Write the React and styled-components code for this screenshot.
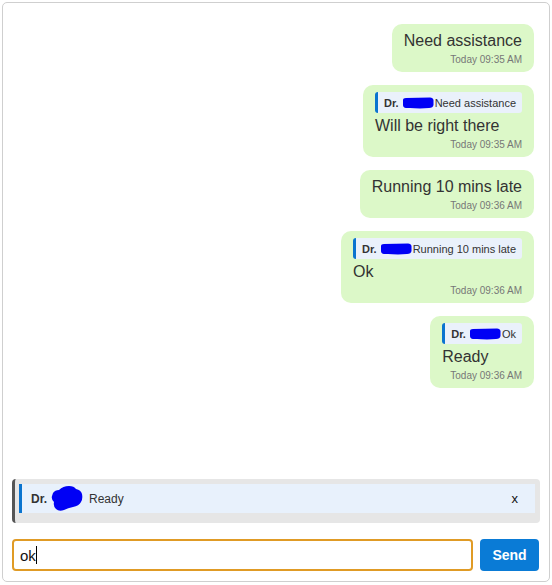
import React from "react";
import styled, { createGlobalStyle } from "styled-components";

const GlobalStyle = createGlobalStyle`
  html, body {
    margin: 0;
    padding: 0;
    background: #ffffff;
    font-family: "Liberation Sans", Arial, sans-serif;
  }
`;

const Panel = styled.div`
  box-sizing: border-box;
  margin: 2px;
  width: 548px;
  height: 580px;
  border: 1px solid #cfcfcf;
  border-radius: 5px;
  display: flex;
  flex-direction: column;
  background: #fff;
`;

const Messages = styled.div`
  flex: 1;
  display: flex;
  flex-direction: column;
  align-items: flex-end;
  gap: 13px;
  padding: 21px 15px 0 15px;
`;

const Bubble = styled.div`
  background: #dcf8c8;
  border-radius: 10px;
  padding: 7px 12px 6px 12px;
  display: flex;
  flex-direction: column;
  max-width: 80%;
`;

const Quote = styled.div`
  display: flex;
  align-items: center;
  height: 21px;
  background: #eaf1fb;
  border-left: 3px solid #0a74cf;
  border-radius: 3px;
  padding: 0 6px 0 6px;
  margin-bottom: 3px;
  font-size: 11px;
  color: #333;
  white-space: nowrap;
`;

const Name = styled.span`
  font-weight: bold;
  color: #333;
`;

const BlobSvg = styled.svg`
  display: block;
  flex: none;
  margin: 0 ${(p) => p.$gap}px 0 3px;
`;

const Text = styled.div`
  font-size: 16px;
  line-height: 20px;
  color: #333;
  text-align: left;
`;

const Time = styled.div`
  font-size: 10px;
  line-height: 13px;
  color: #777;
  text-align: right;
  margin-top: 2px;
`;

const ReplyBar = styled.div`
  margin: 0 9px;
  background: #e6e6e6;
  border-left: 3px solid #555;
  border-radius: 4px;
  padding: 5px 5px 10px 4px;
`;

const ReplyInner = styled.div`
  display: flex;
  align-items: center;
  height: 29px;
  background: #e8f1fc;
  border-left: 3px solid #0a74cf;
  padding: 0 17px 0 9px;
  font-size: 12px;
  color: #333;
`;

const ReplyText = styled.span`
  flex: 1;
`;

const Close = styled.span`
  font-size: 13px;
  color: #111;
`;

const InputRow = styled.div`
  display: flex;
  gap: 7px;
  padding: 16px 10px 10px 9px;
`;

const Input = styled.div`
  box-sizing: border-box;
  flex: 1;
  height: 32px;
  border: 2px solid #e09b25;
  border-radius: 4px;
  padding: 0 6px;
  display: flex;
  align-items: center;
  font-size: 15px;
  color: #111;
`;

const Caret = styled.span`
  display: inline-block;
  width: 1px;
  height: 18px;
  background: #000;
`;

const SendButton = styled.button`
  width: 59px;
  height: 32px;
  border: none;
  border-radius: 4px;
  background: #0a7bd6;
  color: #fff;
  font-family: "Liberation Sans", Arial, sans-serif;
  font-size: 14px;
  font-weight: 600;
  cursor: pointer;
`;

function SmallBlob() {
  return (
    <BlobSvg $gap={1} width="32" height="12" viewBox="0 0 32 12">
      <path
        d="M1 3 Q1 1 4 1 L28 0.5 Q31 0.5 31.5 3 L31.5 8 Q31 11 27 11 L18 11.5 Q12 11 8 11 L4 11 Q1 10.5 1 8 Z"
        fill="#0000f5"
      />
    </BlobSvg>
  );
}

function BigBlob() {
  return (
    <BlobSvg $gap={6} width="33" height="27" viewBox="0 0 33 27">
      <path
        d="M3 8 Q5 5 9 5 Q13 1 19 1 Q24 1 26 4 Q31 5 32 9 Q33 14 31 17 Q29 21 23 22 Q18 23 14 25 Q9 27 6 24 Q3 21 4 17 Q1 14 2 11 Z"
        fill="#0000f5"
      />
    </BlobSvg>
  );
}

const messages = [
  { text: "Need assistance", time: "Today 09:35 AM" },
  { reply: "Need assistance", text: "Will be right there", time: "Today 09:35 AM" },
  { text: "Running 10 mins late", time: "Today 09:36 AM" },
  { reply: "Running 10 mins late", text: "Ok", time: "Today 09:36 AM" },
  { reply: "Ok", text: "Ready", time: "Today 09:36 AM" },
];

function Message({ msg }) {
  return (
    <Bubble>
      {msg.reply && (
        <Quote>
          <Name>Dr.</Name>
          <SmallBlob />
          {msg.reply}
        </Quote>
      )}
      <Text>{msg.text}</Text>
      <Time>{msg.time}</Time>
    </Bubble>
  );
}

export default function App() {
  return (
    <>
      <GlobalStyle />
      <Panel>
        <Messages>
          {messages.map((m, i) => (
            <Message key={i} msg={m} />
          ))}
        </Messages>
        <ReplyBar>
          <ReplyInner>
            <Name>Dr.</Name>
            <BigBlob />
            <ReplyText>Ready</ReplyText>
            <Close>x</Close>
          </ReplyInner>
        </ReplyBar>
        <InputRow>
          <Input>
            ok
            <Caret />
          </Input>
          <SendButton>Send</SendButton>
        </InputRow>
      </Panel>
    </>
  );
}
